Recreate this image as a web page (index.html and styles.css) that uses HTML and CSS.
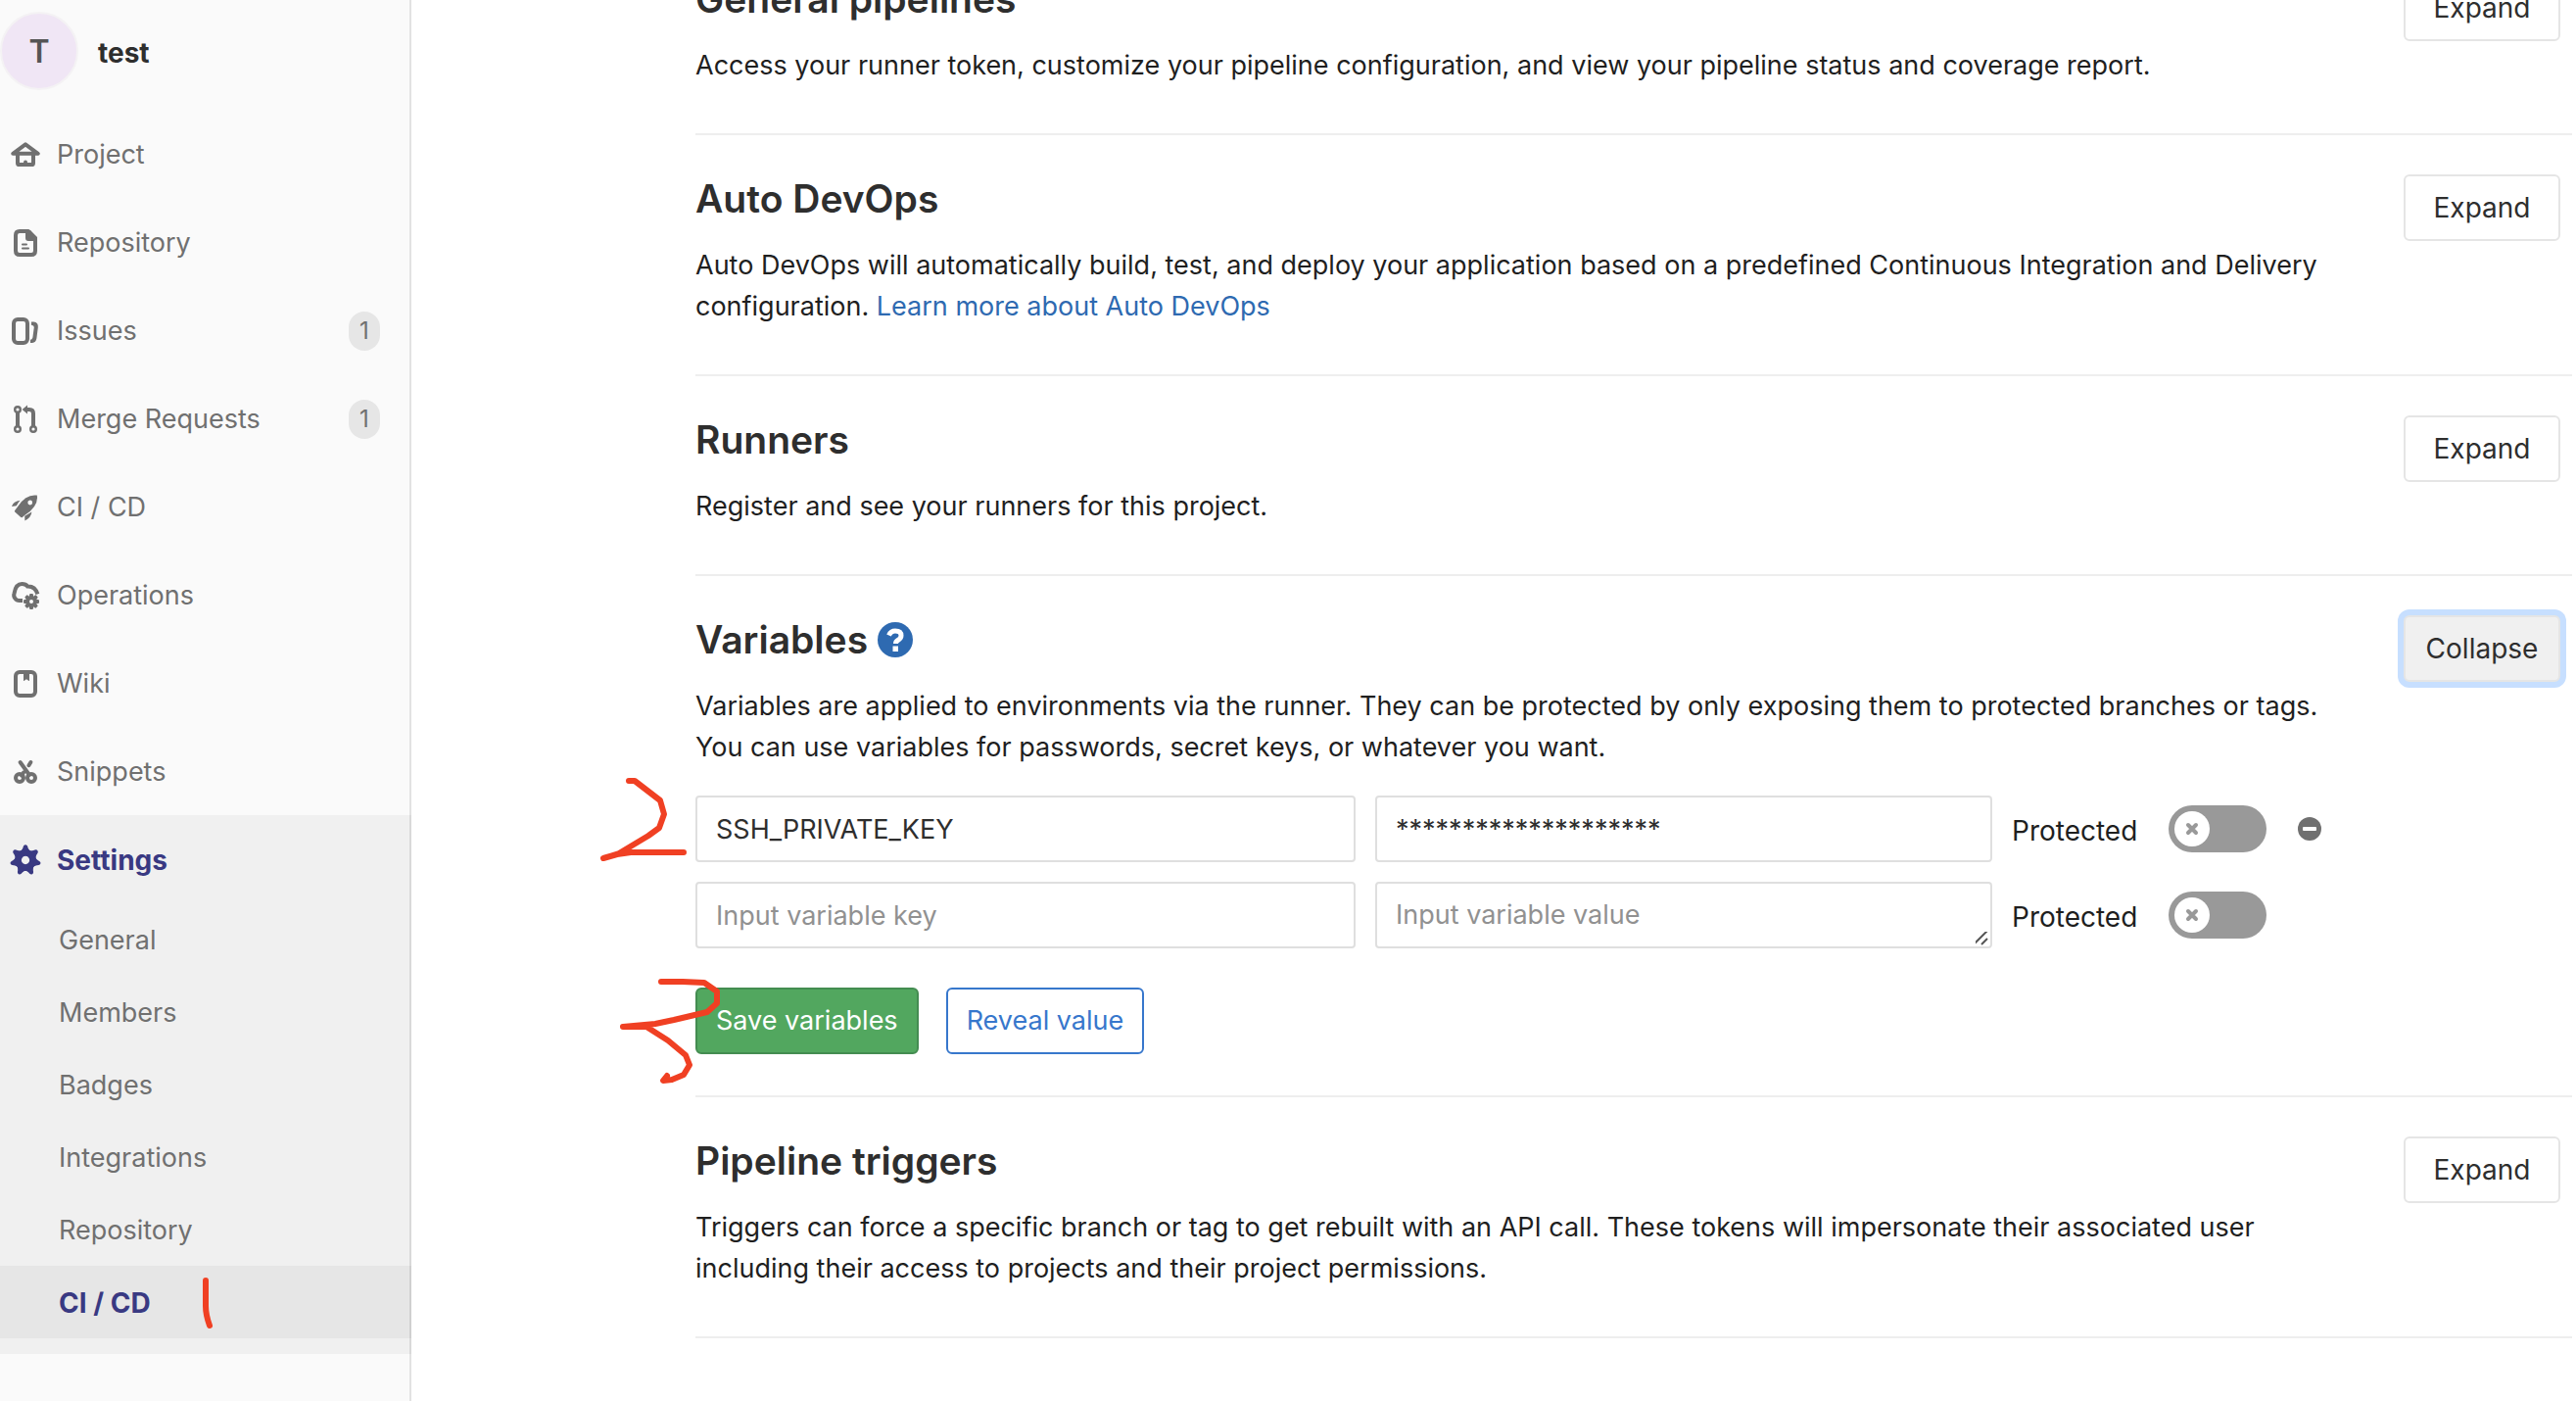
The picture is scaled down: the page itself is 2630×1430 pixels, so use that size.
FILE: index.html
```html
<!DOCTYPE html>
<html lang="en">
<head>
<meta charset="utf-8">
<title>CI / CD Settings · test</title>
<link rel="stylesheet" href="styles.css">
</head>
<body>
<div class="page">
  <aside class="sidebar">
    <a class="project" href="#"><span class="avatar">T</span><span class="project-name">test</span></a>
    <nav>
      <ul class="nav">
        <li><a class="nav-link" href="#">
          <svg class="icon" viewBox="0 0 16 16"><path fill="none" stroke="currentColor" stroke-width="2" stroke-linejoin="round" stroke-linecap="round" d="M4 8v4.200q0 .8.800.8h6.400q.8 0 .8-.8V8"/><path fill="none" stroke="currentColor" stroke-width="2" stroke-linejoin="round" stroke-linecap="round" d="M1.600 7.400 8 2.700l6.400 4.700z"/><path fill="currentColor" d="M7 13v-1.200a1 1 0 0 1 2 0V13z"/></svg>
          Project</a></li>
        <li><a class="nav-link" href="#">
          <svg class="icon" viewBox="0 0 16 16"><path fill="none" stroke="currentColor" stroke-width="2" stroke-linejoin="round" d="M9.500 2H5Q3 2 3 4v8q0 2 2 2h6q2 0 2-2V6z"/><path fill="currentColor" d="M8 1.500h2.500L14 5v2H9.500Q8 7 8 5.500zM6.500 8.200h2a.5.5 0 0 1 0 1h-2a.5.5 0 0 1 0-1zM6.500 10.200h3a.5.5 0 0 1 0 1h-3a.5.5 0 0 1 0-1z"/></svg>
          Repository</a></li>
        <li><a class="nav-link" href="#">
          <svg class="icon" viewBox="0 0 16 16"><rect x="2" y="2" width="7" height="12" rx="2" fill="none" stroke="currentColor" stroke-width="2"/><path fill="currentColor" d="M11 3.300h1.200q2.500.3 2.200 2.800l-.7 5.500q-.4 2.200-2.200 2.400h-1v-1.600q.9 0 1.200-1.200l.7-5.200q0-1-1.400-1.100z"/></svg>
          Issues<span class="count">1</span></a></li>
        <li><a class="nav-link" href="#">
          <svg class="icon" viewBox="0 0 16 16"><g fill="none" stroke="currentColor" stroke-width="1.200"><circle cx="4" cy="3" r="1.400"/><circle cx="4" cy="13" r="1.400"/><circle cx="12" cy="13" r="1.400"/><path stroke-width="2" d="M4 4.500v7M12 11.500V5q0-2-2-2H8"/></g><path fill="currentColor" d="M6.300 3 9 .7v4.600z"/></svg>
          Merge Requests<span class="count">1</span></a></li>
        <li><a class="nav-link" href="#">
          <svg class="icon" viewBox="0 0 16 16"><path fill="currentColor" fill-rule="evenodd" d="M13.900 1.800q.5 3-1.400 5.700-1.800 2.600-4.600 4.300l-1.500 1.200q-.5.300-.9-.1l-2.900-2.600q-.3-.4 0-.8l1.300-1.800q1.700-2.900 4.300-4.600 2.700-1.800 5.700-1.300zM10.300 4.300a1.200 1.200 0 1 0 .1 2.400 1.200 1.200 0 0 0-.1-2.400zM5.300 4.400q-.9.900-1.900 2.700L1 7.500q.8-2.600 4.300-3.100zM11.200 10.300q-.3 3-3.500 4.400l-.1-2.300z"/></svg>
          CI / CD</a></li>
        <li><a class="nav-link" href="#">
          <svg class="icon" viewBox="0 0 16 16"><path fill="none" stroke="currentColor" stroke-width="2" d="M6.500 10.500H5A2.800 2.800 0 0 1 2.300 6.700Q3 2 6.200 2q2 0 2.800 1.200 4-.2 5.200 4"/><g transform="translate(11 11)"><g fill="currentColor"><rect x="-1" y="-4" width="2" height="8" rx=".6"/><rect x="-1" y="-4" width="2" height="8" rx=".6" transform="rotate(45)"/><rect x="-1" y="-4" width="2" height="8" rx=".6" transform="rotate(90)"/><rect x="-1" y="-4" width="2" height="8" rx=".6" transform="rotate(135)"/></g><circle r="2" fill="#fafafa" stroke="currentColor" stroke-width="2"/></g></svg>
          Operations</a></li>
        <li><a class="nav-link" href="#">
          <svg class="icon" viewBox="0 0 16 16"><rect x="3" y="2" width="10" height="12" rx="2" fill="none" stroke="currentColor" stroke-width="2"/><path fill="currentColor" d="M7 2h3v4.200q0 .4-.4.200L8.500 5.600l-1.100.8Q7 6.600 7 6.200z"/></svg>
          Wiki</a></li>
        <li><a class="nav-link" href="#">
          <svg class="icon" viewBox="0 0 16 16"><g fill="none" stroke="currentColor" stroke-width="2"><circle cx="5" cy="11" r="2"/><circle cx="11" cy="11" r="2"/><path stroke-linecap="round" d="M5.300 3 10 9.500M10.700 3l-1 1.600M7 8.300l-1 1.500"/></g></svg>
          Snippets</a></li>
        <li class="open">
          <a class="nav-link active" href="#">
          <svg class="icon" viewBox="0 0 16 16"><path fill="none" stroke="currentColor" stroke-width="3.400" d="M8 4.200a3.800 3.800 0 1 0 .01 0z"/><g fill="currentColor" transform="translate(8 8)"><path id="tooth" d="M-2.300-4.500-1.300-6.300Q-1-7.900 0-7.900T1.300-6.300L2.300-4.500z"/><use href="#tooth" transform="rotate(51.400)"/><use href="#tooth" transform="rotate(102.900)"/><use href="#tooth" transform="rotate(154.300)"/><use href="#tooth" transform="rotate(205.700)"/><use href="#tooth" transform="rotate(257.100)"/><use href="#tooth" transform="rotate(308.600)"/></g></svg>
          Settings</a>
          <ul class="subnav">
            <li><a href="#">General</a></li>
            <li><a href="#">Members</a></li>
            <li><a href="#">Badges</a></li>
            <li><a href="#">Integrations</a></li>
            <li><a href="#">Repository</a></li>
            <li><a class="current" href="#">CI / CD
              <svg class="mark mark-one" viewBox="0 0 12 54"><path d="M4 3v26q0 9 4 20"/></svg></a></li>
          </ul>
        </li>
      </ul>
    </nav>
  </aside>

  <main class="content">
    <section class="section">
      <div class="section-text">
        <h4>General pipelines</h4>
        <p>Access your runner token, customize your pipeline configuration, and view your pipeline status and coverage report.</p>
      </div>
      <button class="btn" type="button">Expand</button>
    </section>
    <section class="section">
      <div class="section-text">
        <h4>Auto DevOps</h4>
        <p>Auto DevOps will automatically build, test, and deploy your application based on a predefined Continuous Integration and Delivery configuration. <a href="#">Learn more about Auto DevOps</a></p>
      </div>
      <button class="btn" type="button">Expand</button>
    </section>
    <section class="section">
      <div class="section-text">
        <h4>Runners</h4>
        <p>Register and see your runners for this project.</p>
      </div>
      <button class="btn" type="button">Expand</button>
    </section>
    <section class="section section-open">
      <div class="section-text">
        <h4>Variables <a class="help" href="#" aria-label="Help"><svg viewBox="0 0 36 36"><circle cx="18" cy="18" r="18" fill="currentColor"/><path fill="none" stroke="#fff" stroke-width="5" d="M11.500 13.500Q13.500 9 18 9q6 0 6 4.800 0 2.700-3 4.500-2.500 1.400-2.500 3.700"/><path fill="#fff" d="M15.500 24.500h5.500v5.500h-5.500z"/></svg></a></h4>
        <p>Variables are applied to environments via the runner. They can be protected by only exposing them to protected branches or tags. You can use variables for passwords, secret keys, or whatever you want.</p>
      </div>
      <button class="btn focused" type="button">Collapse</button>
      <form class="variables">
        <div class="row">
          <input class="field key" type="text" value="SSH_PRIVATE_KEY" aria-label="Variable key">
          <input class="field value" type="text" value="********************" aria-label="Variable value">
          <label class="protect"><span>Protected</span><input class="toggle" type="checkbox"></label>
          <button class="remove" type="button" aria-label="Remove variable"><svg viewBox="0 0 24 24"><circle cx="12" cy="12" r="12" fill="currentColor"/><rect x="5" y="10" width="14" height="4" rx="1" fill="#fff"/></svg></button>
          <svg class="mark mark-two" viewBox="0 0 88 86"><path d="M29 3h6l26 20 4 14-5 14-11 8L19 77 3 82l14-4 14-2h54"/></svg>
        </div>
        <div class="row">
          <input class="field key" type="text" placeholder="Input variable key" aria-label="Variable key">
          <textarea class="field value" rows="1" placeholder="Input variable value" aria-label="Variable value"></textarea>
          <label class="protect"><span>Protected</span><input class="toggle" type="checkbox"></label>
        </div>
        <div class="actions">
          <button class="btn btn-save" type="submit">Save variables</button>
          <button class="btn btn-reveal" type="button">Reveal value</button>
          <svg class="mark mark-three" viewBox="0 0 104 110"><path d="M42 4h22l22 1 13 9v12l-10 9-34 8-19 4-33 3h24l22 14 18 15 4 10-6 10-12 5-9 1 4-5"/></svg>
        </div>
      </form>
    </section>
    <section class="section">
      <div class="section-text">
        <h4>Pipeline triggers</h4>
        <p>Triggers can force a specific branch or tag to get rebuilt with an API call. These tokens will impersonate their associated user including their access to projects and their project permissions.</p>
      </div>
      <button class="btn" type="button">Expand</button>
    </section>
  </main>
</div>
</body>
</html>
```
FILE: styles.css
```css
* { box-sizing: border-box; }

body {
  margin: 0;
  background: #fff;
  color: #1f1f1f;
  font: 27px/42px Inter, "Liberation Sans", sans-serif;
}

ul { margin: 0; padding: 0; list-style: none; }
a { color: #2e6ab1; text-decoration: none; }
h4, p { margin: 0; }
button, input, textarea { font: inherit; }

.page { display: flex; min-height: 100vh; overflow: hidden; }

/* Sidebar */
.sidebar {
  flex: 0 0 420px;
  background: #fafafa;
  box-shadow: inset -2px 0 #e2e2e2;
}
.project {
  display: flex;
  align-items: center;
  gap: 20px;
  height: 112px;
  padding-bottom: 8px;
  color: #2e2e2e;
  font-size: 28px;
  font-weight: 700;
}
.project-name { padding-top: 4px; }
.avatar {
  width: 80px;
  height: 80px;
  border: 2px solid #f4f2f4;
  border-radius: 50%;
  background: #f0e6f5;
  color: #555;
  font-size: 32px;
  font-weight: 600;
  line-height: 78px;
  text-align: center;
}
.nav-link {
  display: flex;
  align-items: center;
  gap: 16px;
  height: 90px;
  padding: 2px 32px 0 10px;
  color: #707070;
}
.icon { flex: none; width: 32px; height: 32px; }
.count {
  margin-left: auto;
  width: 32px;
  border-radius: 16px;
  background: #e6e6e6;
  font-size: 24px;
  line-height: 40px;
  text-align: center;
}
.open { padding-bottom: 16px; background: rgba(0, 0, 0, .04); }
.active, .subnav .current { color: #393982; font-size: 28px; font-weight: 700; }
.subnav a {
  display: block;
  position: relative;
  padding: 17px 60px 15px;
  color: #707070;
}
.subnav .current { background: rgba(0, 0, 0, .04); color: #393982; }
.nav .active { color: #393982; }

/* Settings sections; the page is scrolled part of the way down */
.content { flex: 1; margin-top: -66px; padding: 0 4px 0 290px; }
.section {
  display: grid;
  grid-template-columns: minmax(0, 1684px) 160px;
  justify-content: space-between;
  align-items: start;
  padding: 40px 12px 48px 0;
  border-bottom: 2px solid #eee;
}
.section-open { padding-bottom: 42px; }
h4 { margin-bottom: 22px; color: #2e2e2e; font-size: 39px; font-weight: 600; line-height: 50px; }
.help svg { width: 36px; height: 36px; vertical-align: -4px; }

.btn {
  height: 68px;
  padding: 0 19px;
  border: 2px solid #e5e5e5;
  border-radius: 6px;
  background: #fff;
  color: #2e2e2e;
}
.section > .btn { padding: 0; font-size: 28px; }
.section > .focused { background: #f0f0f0; box-shadow: 0 0 0 6px #c7dfff; }
.actions .btn-save { border-color: #448c51; background: #52a75f; color: #fff; }
.actions .btn-reveal { border-color: #3777cc; color: #3777cc; }

/* Variables form */
.variables { grid-column: 1 / -1; margin-top: 28px; }
.row, .actions { position: relative; display: flex; align-items: center; }
.row { gap: 20px; margin-bottom: 20px; }
.field {
  height: 68px;
  padding: 11px 19px;
  border: 2px solid #dfdfdf;
  border-radius: 4px;
  background: #fff;
  color: #2e2e2e;
}
.field::placeholder { color: #919191; }
.key { width: 674px; }
.value { width: 630px; }
textarea.field { overflow: hidden; }
textarea.field::-webkit-resizer {
  background: url("data:image/svg+xml,%3Csvg xmlns='http://www.w3.org/2000/svg' width='18' height='18'%3E%3Cpath d='M1 16 15 2M9 16l6-6' stroke='%23555' stroke-width='2'/%3E%3C/svg%3E") right bottom no-repeat;
}
.protect { display: flex; align-items: center; gap: 32px; font-size: 28px; }
.protect span { padding-top: 3px; }
.toggle {
  appearance: none;
  width: 100px;
  height: 48px;
  margin: 0;
  padding: 6px;
  border-radius: 24px;
  background: #999;
}
.toggle::before {
  content: "";
  display: block;
  width: 36px;
  height: 36px;
  border-radius: 50%;
  background: #fff url("data:image/svg+xml,%3Csvg xmlns='http://www.w3.org/2000/svg' width='14' height='14'%3E%3Cpath d='m3 3 8 8m0-8-8 8' stroke='%23999' stroke-width='4' stroke-linecap='round'/%3E%3C/svg%3E") center no-repeat;
}
.remove { display: flex; margin-left: 12px; padding: 0; border: 0; background: none; color: #707070; }
.remove svg { width: 24px; height: 24px; }
.actions { gap: 28px; margin-top: 40px; }

/* Hand-drawn step marks over the page */
.mark { position: absolute; overflow: visible; fill: none; stroke: #f04023; stroke-width: 6; stroke-linecap: round; stroke-linejoin: round; }
.mark-one { left: 206px; top: 12px; width: 12px; height: 54px; }
.mark-two { left: -97px; top: -18px; width: 88px; height: 86px; }
.mark-three { left: -77px; top: -10px; width: 104px; height: 110px; }
```
